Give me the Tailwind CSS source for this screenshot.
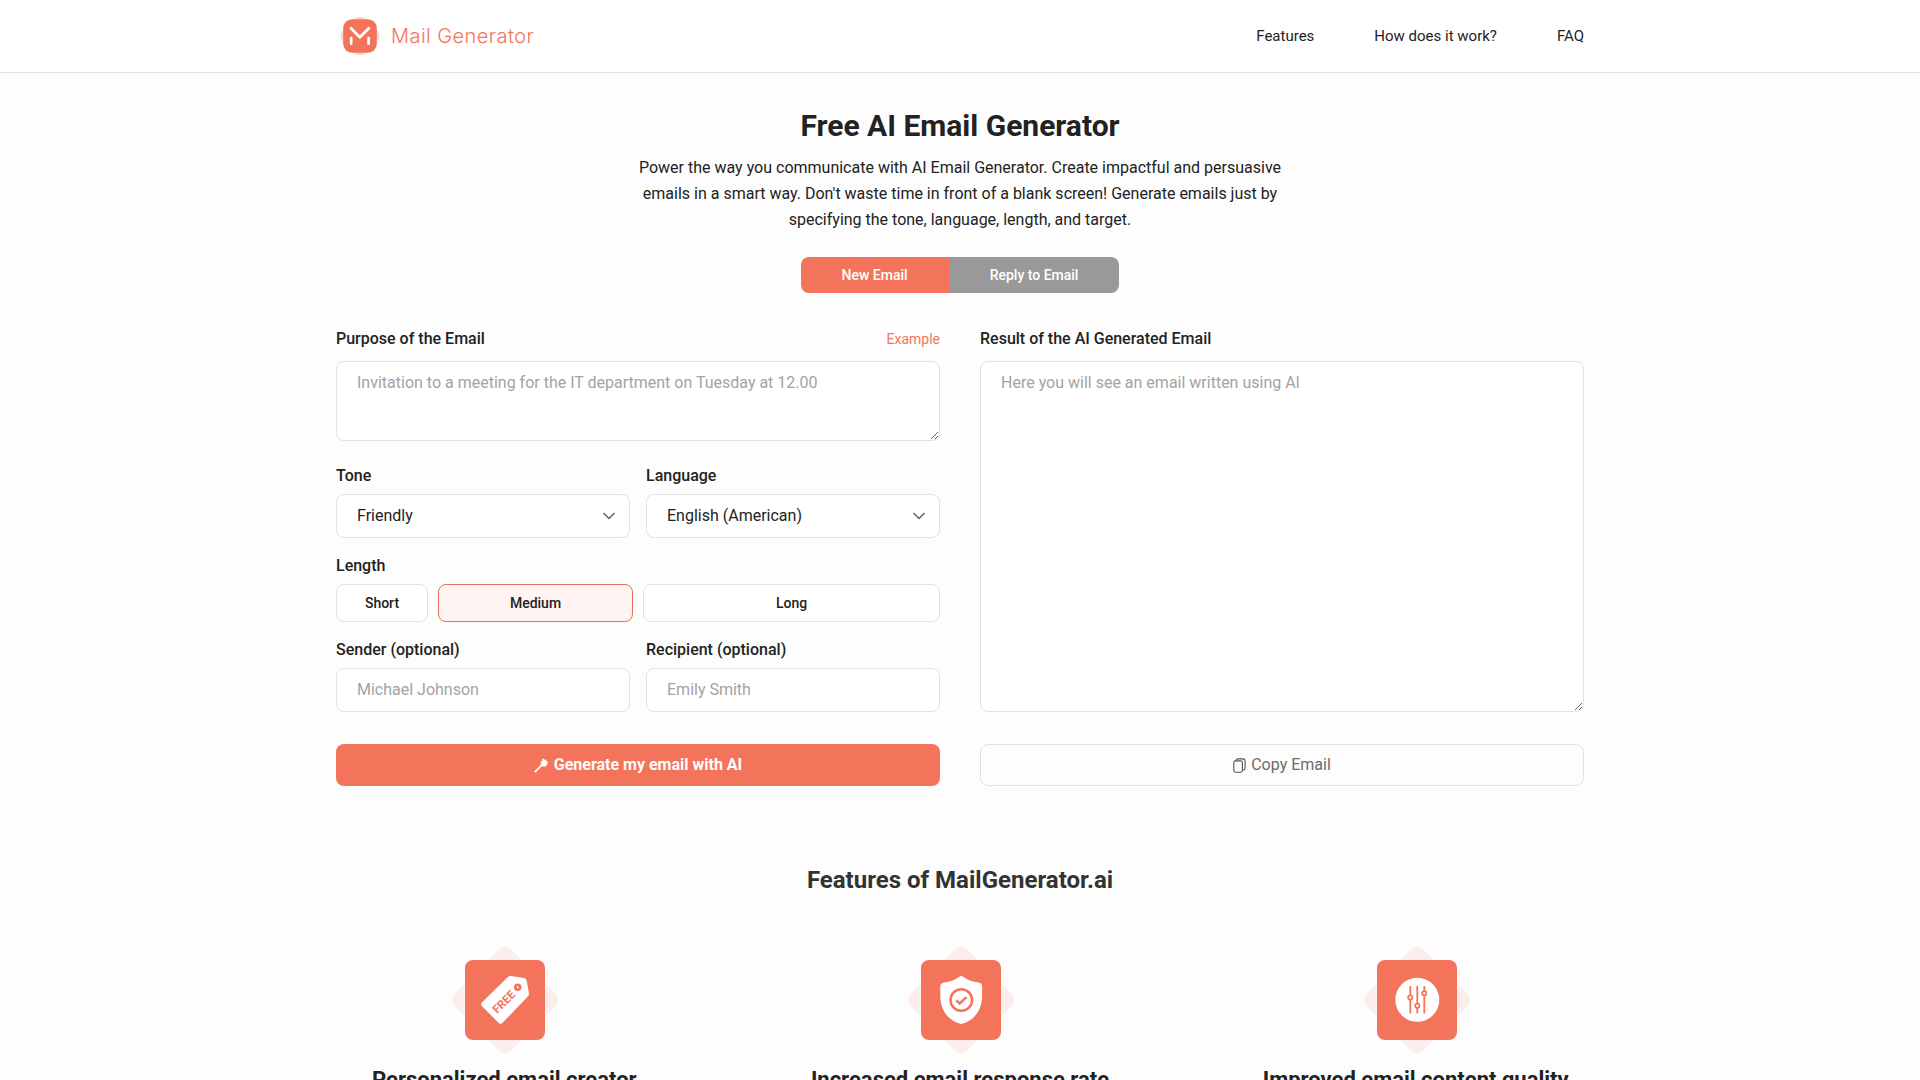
<!DOCTYPE html>
<html lang="en">
<head>
<meta charset="utf-8">
<title>Mail Generator</title>
<script src="https://cdn.jsdelivr.net/npm/@tailwindcss/browser@4"></script>
</head>
<body class="h-screen overflow-hidden bg-[#fdfdfd] font-[Roboto,sans-serif] text-base text-[#222222]">
<header class="h-[73px] border-b border-[#dfdfdf] bg-white">
  <div class="mx-auto flex h-full w-[1248px] items-center justify-between">
    <a class="flex items-center gap-[11px] text-[#f3745b]">
      <svg class="ml-1 size-10" viewBox="0 0 40 40" fill="none">
        <rect x="3.6" y="3.6" width="32.8" height="32.8" rx="9" transform="rotate(45 20 20)" fill="#fbd5cd"/>
        <rect x="3.2" y="3.2" width="33.6" height="33.6" rx="9" fill="#f3745b"/>
        <path d="M11 12.3L19.8 21.3L28.8 12.3M11.2 22V27.8M28.6 22V27.8" stroke="#fff" stroke-width="2.7" stroke-linecap="round" stroke-linejoin="round"/>
      </svg>
      <span class="font-[Inter,sans-serif] text-xl font-[330] tracking-[0.45px]">Mail Generator</span>
    </a>
    <nav class="flex gap-15 text-[15px]">
      <a>Features</a><a>How does it work?</a><a>FAQ</a>
    </nav>
  </div>
</header>

<main class="mx-auto w-[1248px]">
  <section class="flex flex-col items-center pt-[33px] text-center">
    <h1 class="text-[30px] leading-10 font-bold">Free AI Email Generator</h1>
    <p class="mt-[9px] w-[660px] leading-[26px]">Power the way you communicate with AI Email Generator. Create impactful and persuasive emails in a smart way. Don't waste time in front of a blank screen! Generate emails just by specifying the tone, language, length, and target.</p>
    <div class="mt-6 flex h-9 overflow-hidden rounded-lg text-sm font-medium text-white">
      <button class="bg-[#f3745b] px-[41px]">New Email</button>
      <button class="bg-[#999999] px-[41px]">Reply to Email</button>
    </div>
  </section>

  <section class="mt-[34px] grid grid-cols-2 gap-10">
    <form class="flex flex-col">
      <div class="flex h-6 items-center justify-between">
        <label class="font-medium">Purpose of the Email</label>
        <a class="text-sm text-[#f3745b]">Example</a>
      </div>
      <textarea class="mt-2.5 block h-20 resize-y rounded-lg border border-[#e2e2e2] bg-white px-5 py-[9px] leading-6 placeholder:text-[#a3a3a3]" placeholder="Invitation to a meeting for the IT department on Tuesday at 12.00"></textarea>

      <div class="mt-[23px] grid grid-cols-2 gap-4">
        <div>
          <label class="block leading-6 font-medium">Tone</label>
          <div class="mt-1.5 flex h-11 items-center justify-between rounded-lg border border-[#e2e2e2] bg-white pr-3.5 pl-5">
            <span>Friendly</span>
            <svg class="size-3" viewBox="0 0 12 12" fill="none" stroke="#6b6b70" stroke-width="1.7" stroke-linecap="round" stroke-linejoin="round"><path d="M1 3.5L6 8.5L11 3.5"/></svg>
          </div>
        </div>
        <div>
          <label class="block leading-6 font-medium">Language</label>
          <div class="mt-1.5 flex h-11 items-center justify-between rounded-lg border border-[#e2e2e2] bg-white pr-3.5 pl-5">
            <span>English (American)</span>
            <svg class="size-3" viewBox="0 0 12 12" fill="none" stroke="#6b6b70" stroke-width="1.7" stroke-linecap="round" stroke-linejoin="round"><path d="M1 3.5L6 8.5L11 3.5"/></svg>
          </div>
        </div>
      </div>

      <label class="mt-4 block leading-6 font-medium">Length</label>
      <div class="mt-1.5 flex h-[38px] gap-2.5 text-sm font-medium">
        <button type="button" class="w-[92px] rounded-lg border border-[#e2e2e2] bg-white">Short</button>
        <button type="button" class="w-[195px] rounded-lg border border-[#e2705f] bg-[#fff4f2]">Medium</button>
        <button type="button" class="flex-1 rounded-lg border border-[#e2e2e2] bg-white">Long</button>
      </div>

      <div class="mt-4 grid grid-cols-2 gap-4">
        <div>
          <label class="block leading-6 font-medium">Sender (optional)</label>
          <input class="mt-1.5 block h-11 w-full rounded-lg border border-[#e2e2e2] bg-white px-5 pb-0.5 placeholder:text-[#a3a3a3]" placeholder="Michael Johnson">
        </div>
        <div>
          <label class="block leading-6 font-medium">Recipient (optional)</label>
          <input class="mt-1.5 block h-11 w-full rounded-lg border border-[#e2e2e2] bg-white px-5 pb-0.5 placeholder:text-[#a3a3a3]" placeholder="Emily Smith">
        </div>
      </div>

      <button type="button" class="mt-8 flex h-[42px] items-center justify-center gap-[5px] rounded-lg bg-[#f3745b] font-bold text-white">
        <svg class="size-[15px]" viewBox="0 0 15 15" fill="#fff"><path d="M9.8 0.4L10.5 2.1L12.4 1.3L12.2 3.3L14.5 4L12.9 5.3L14 7.1L12 7.1L11.7 9.3L10.1 8L8.4 9.2L8.1 7.2L6 6.6L7.4 5.2L6.2 3.4L8.3 3.3L8.2 1.2Z"/><path d="M8.3 6.6L1.3 13.7" stroke="#fff" stroke-width="1.7" stroke-linecap="round"/></svg>
        Generate my email with AI
      </button>
    </form>

    <div class="flex flex-col">
      <label class="leading-6 font-medium">Result of the AI Generated Email</label>
      <textarea class="mt-2.5 block flex-1 resize-y rounded-lg border border-[#e2e2e2] bg-white px-5 py-[9px] leading-6 placeholder:text-[#a3a3a3]" placeholder="Here you will see an email written using AI"></textarea>
      <button class="mt-8 flex h-[42px] items-center justify-center gap-[5px] rounded-lg border border-[#e2e2e2] text-[#6b6b6b]">
        <svg class="h-[15px] w-[13px]" viewBox="0 0 13 15" fill="none" stroke="#555" stroke-width="1.1"><rect x="0.8" y="2.9" width="8.6" height="11.3" rx="1.6"/><path d="M3 2.4C3.2 1.3 3.8 0.9 4.8 0.9H9.9C11.3 0.9 12.1 1.7 12.1 3V10C12.1 11.2 11.5 12 10.2 12.1"/></svg>
        Copy Email
      </button>
    </div>
  </section>

  <section class="mt-[78px]">
    <h2 class="text-center text-2xl leading-8 font-bold text-[#333333]">Features of MailGenerator.ai</h2>
    <div class="mt-16 grid grid-cols-3 gap-[119px] text-center">
      <div class="flex flex-col items-center">
        <svg class="ml-0.5 size-20 overflow-visible" viewBox="0 0 80 80">
          <rect width="80" height="80" rx="8" transform="rotate(45 40 40)" fill="#fdeeee"/>
          <rect width="80" height="80" rx="8" fill="#f3745b"/>
          <path d="M42.6 17.2Q44.2 15.7 46.2 16L59 18Q61.2 18.4 61.6 20.5L63.9 32.8Q64.3 35 62.8 36.5L37.6 62.8Q35.7 64.8 33.7 62.9L17.1 46.2Q15.2 44.1 17.1 42.2Z" fill="#fff"/>
          <circle cx="52.7" cy="27.3" r="2.4" fill="#fff" stroke="#f3745b" stroke-width="2.8"/>
          <text x="39" y="45.8" text-anchor="middle" transform="rotate(-45 39 42)" class="text-[11.5px] font-bold" fill="#f3745b">FREE</text>
        </svg>
        <h3 class="mt-6 text-[22px] leading-8 font-bold whitespace-nowrap">Personalized email creator</h3>
      </div>
      <div class="flex flex-col items-center">
        <svg class="ml-0.5 size-20 overflow-visible" viewBox="0 0 80 80">
          <rect width="80" height="80" rx="8" transform="rotate(45 40 40)" fill="#fdeeee"/>
          <rect width="80" height="80" rx="8" fill="#f3745b"/>
          <path d="M38.3 16.8Q40.2 15.4 42.2 16.8Q49 22 57.5 22.4Q61.1 22.8 61.1 26.5V36C61.1 49.5 54 59.5 42 63.6Q40.2 64.3 38.4 63.6C26.5 59.5 19.3 49.5 19.3 36V26.5Q19.3 22.8 23 22.4Q31.5 22 38.3 16.8Z" fill="#fff"/>
          <circle cx="40.3" cy="40" r="10.8" fill="none" stroke="#f3745b" stroke-width="2.5"/>
          <path d="M35.3 40.4L38.7 43.5L45.5 37.2" fill="none" stroke="#f3745b" stroke-width="2.5"/>
        </svg>
        <h3 class="mt-6 text-[22px] leading-8 font-bold whitespace-nowrap">Increased email response rate</h3>
      </div>
      <div class="flex flex-col items-center">
        <svg class="ml-0.5 size-20 overflow-visible" viewBox="0 0 80 80">
          <rect width="80" height="80" rx="8" transform="rotate(45 40 40)" fill="#fdeeee"/>
          <rect width="80" height="80" rx="8" fill="#f3745b"/>
          <circle cx="40.3" cy="39.8" r="22" fill="#fff"/>
          <g fill="#fff" stroke="#f3745b" stroke-width="1.8">
            <path d="M33.3 26V53.5M40.3 26V53.5M47.3 26V53.5"/>
            <circle cx="33.3" cy="37.5" r="2.1"/><circle cx="40.3" cy="45.7" r="2.1"/><circle cx="47.3" cy="33.3" r="2.1"/>
          </g>
        </svg>
        <h3 class="mt-6 text-[22px] leading-8 font-bold whitespace-nowrap">Improved email content quality</h3>
      </div>
    </div>
  </section>
</main>
</body>
</html>
